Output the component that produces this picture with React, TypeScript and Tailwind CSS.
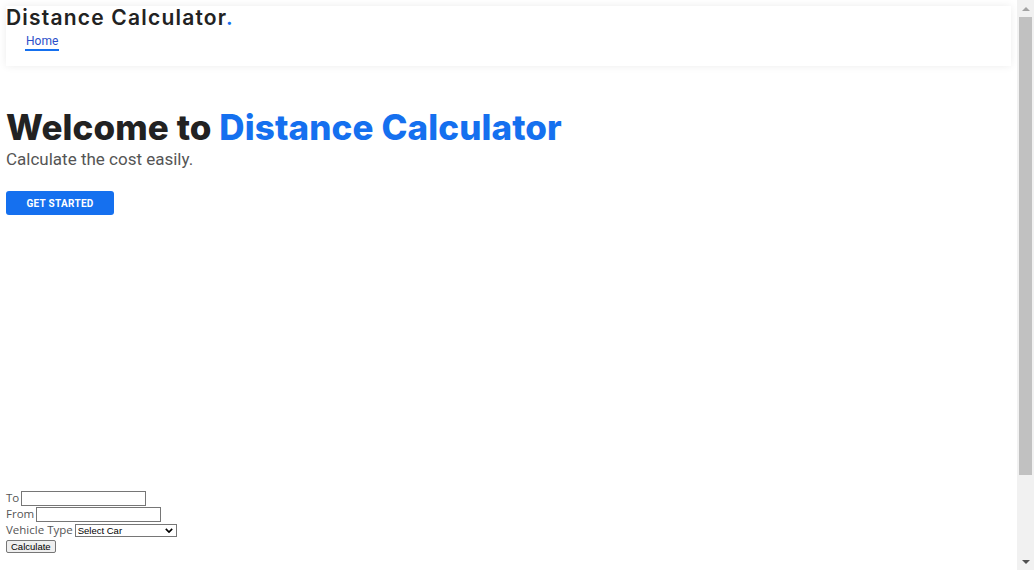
import React from "react";

const poppins = { fontFamily: "Inter, 'DejaVu Sans', sans-serif" };

function Header() {
  return (
    <header className="mx-[6px] mt-[6px] h-[60px] bg-white shadow-[0_0_8px_rgba(0,0,0,0.08)]">
      <div
        className="text-[21px] font-semibold leading-[22px] tracking-[1.2px] text-[#222] pt-[1px]"
        style={poppins}
      >
        Distance Calculator<span className="text-[#1570ef]">.</span>
      </div>
      <nav className="mt-[-2px] pl-[19px]">
        <a
          href="#"
          className="inline-block border-b-2 border-[#1570ef] px-[1px] pb-[1px] font-['Roboto',sans-serif] text-[12px] leading-[14px] text-[#2c4fc9]"
        >
          Home
        </a>
      </nav>
    </header>
  );
}

function Hero() {
  return (
    <section className="px-[6px] pt-[39px]">
      <h1
        className="text-[35px] font-extrabold leading-[44px] tracking-[0.1px] text-[#222]"
        style={poppins}
      >
        Welcome to <span className="text-[#1570ef]">Distance Calculator</span>
      </h1>
      <p className="mt-0 font-['Roboto',sans-serif] text-[17px] leading-[20px] text-[#555]">
        Calculate the cost easily.
      </p>
      <button className="mt-[22px] h-[24px] w-[108px] rounded-[3px] bg-[#1570ef] font-['Roboto',sans-serif] text-[10px] font-bold tracking-[0.3px] text-white">
        GET STARTED
      </button>
    </section>
  );
}

function CostForm() {
  const input =
    "h-[15px] border border-[#767676] bg-white px-[2px] text-[11px] font-['Liberation_Sans',Arial,sans-serif] outline-none";
  return (
    <form className="mt-[275px] px-[6px] font-['Open_Sans','Noto_Sans',sans-serif] text-[11.5px] leading-[16px] text-[#555]">
      <div className="flex items-center gap-[2px]">
        <label>To</label>
        <input className={`${input} w-[125px]`} />
      </div>
      <div className="flex items-center gap-[2px]">
        <label>From</label>
        <input className={`${input} w-[125px]`} />
      </div>
      <div className="flex items-center gap-[2px]">
        <label>Vehicle Type</label>
        <div className="relative flex h-[13px] w-[102px] items-center border border-[#767676] bg-white pl-[2px] font-['Liberation_Sans',Arial,sans-serif] text-[9.5px] leading-[11px] text-black">
          Select Car
          <svg
            viewBox="0 0 10 6"
            className="absolute right-[3px] top-[3px] h-[5px] w-[8px]"
          >
            <path d="M1 1 L5 5 L9 1" fill="none" stroke="#000" strokeWidth="2" />
          </svg>
        </div>
      </div>
      <button
        type="button"
        className="mt-[1px] h-[13px] rounded-[2px] border border-[#767676] bg-[#efefef] px-[4px] font-['Liberation_Sans',Arial,sans-serif] text-[9.5px] leading-[11px] text-black"
      >
        Calculate
      </button>
    </form>
  );
}

// drawn stand-in for the classic browser scrollbar in the reference
function Scrollbar() {
  return (
    <aside className="fixed right-0 top-0 flex h-[570px] w-[17px] flex-col bg-[#f1f1f1]">
      <div className="flex h-[17px] items-center justify-center">
        <svg viewBox="0 0 8 4" className="h-[4px] w-[8px]">
          <path d="M0 4 L4 0 L8 4 Z" fill="#a3a3a3" />
        </svg>
      </div>
      <div className="mx-[2px] h-[458px] bg-[#c1c1c1]" />
      <div className="flex-1" />
      <div className="flex h-[17px] items-center justify-center">
        <svg viewBox="0 0 8 4" className="h-[4px] w-[8px]">
          <path d="M0 0 L8 0 L4 4 Z" fill="#505050" />
        </svg>
      </div>
    </aside>
  );
}

export default function App() {
  return (
    <div className="min-h-[667px] bg-white">
      <div className="mr-[17px]">
        <Header />
        <Hero />
        <CostForm />
        <div className="h-[110px]" />
      </div>
      <Scrollbar />
    </div>
  );
}
